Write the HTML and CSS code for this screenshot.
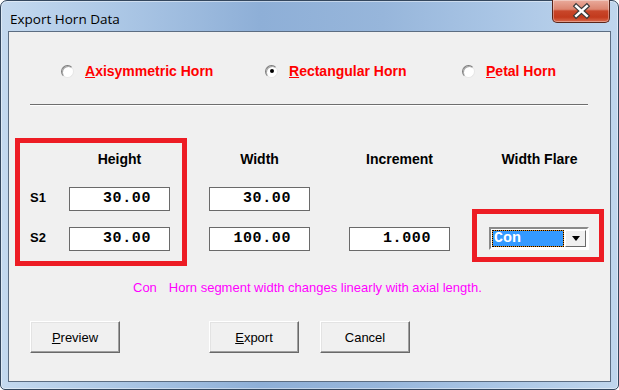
FILE: index.html
```html
<!DOCTYPE html>
<html>
<head>
<meta charset="utf-8">
<title>Export Horn Data</title>
<link rel="stylesheet" href="styles.css">
</head>
<body>
<div class="window">
  <div class="titlebar">
    <span class="title">Export Horn Data</span>
    <button class="close" aria-label="Close">
      <svg width="58" height="22" viewBox="0 0 58 22">
        <path d="M24 6 L35 16 M35 6 L24 16" stroke="#3a3a3a" stroke-width="5" stroke-linecap="square"/>
        <path d="M24 6 L35 16 M35 6 L24 16" stroke="#fff" stroke-width="2.6" stroke-linecap="square"/>
      </svg>
    </button>
  </div>
  <div class="client">
    <div class="radios">
      <label class="opt"><span class="radio"></span><span class="opt-text"><u>A</u>xisymmetric Horn</span></label>
      <label class="opt"><span class="radio radio-on"></span><span class="opt-text"><u>R</u>ectangular Horn</span></label>
      <label class="opt"><span class="radio"></span><span class="opt-text"><u>P</u>etal Horn</span></label>
    </div>
    <div class="sep"></div>
    <div class="grid">
      <div></div>
      <div class="hdr">Height</div>
      <div class="hdr">Width</div>
      <div class="hdr">Increment</div>
      <div class="hdr">Width Flare</div>

      <div class="rowlbl">S1</div>
      <div class="field">30.00</div>
      <div class="field">30.00</div>
      <div></div>
      <div></div>

      <div class="rowlbl">S2</div>
      <div class="field">30.00</div>
      <div class="field">100.00</div>
      <div class="field">1.000</div>
      <div class="combo">
        <span class="combo-value">Con</span>
        <span class="combo-btn"><span class="tri"></span></span>
      </div>
    </div>
    <p class="info"><span>Con</span><span class="info-desc">Horn segment width changes linearly with axial length.</span></p>
    <div class="buttons">
      <button class="btn"><u>P</u>review</button>
      <button class="btn"><u>E</u>xport</button>
      <button class="btn">Cancel</button>
    </div>
    <div class="mark mark-left"></div>
    <div class="mark mark-right"></div>
  </div>
</div>
</body>
</html>
```
FILE: styles.css
```css
html, body {
  margin: 0;
  padding: 0;
}
body {
  width: 619px;
  height: 390px;
  overflow: hidden;
  background: #ffffff;
  font-family: "Liberation Sans", Arial, sans-serif;
}
.window {
  position: relative;
  box-sizing: border-box;
  width: 619px;
  height: 390px;
  border: 1px solid #34475e;
  border-radius: 7px 7px 5px 5px;
  background: linear-gradient(90deg, #c4d9ef 0%, #adc8e6 18%, #8eafd7 42%, #97b6db 62%, #a9c5e5 80%, #c0d6ed 100%);
  box-shadow: inset 0 0 0 1px rgba(255,255,255,0.45);
  padding: 0 7px 7px;
  display: flex;
  flex-direction: column;
}
.titlebar {
  height: 30px;
  display: flex;
  align-items: flex-start;
}
.title {
  margin: 9px 0 0 2px;
  font-family: "Open Sans", "Noto Sans", sans-serif;
  font-size: 13.5px;
  line-height: 18px;
  color: #000;
}
.close {
  margin: -1px 1px 0 auto;
  width: 58px;
  height: 23px;
  padding: 0;
  box-sizing: border-box;
  border: 1px solid #5a2519;
  border-top: none;
  border-radius: 0 0 5px 5px;
  background: linear-gradient(#e9ab9c 0%, #dc8570 42%, #c8462a 50%, #c23a1d 78%, #d9694c 100%);
  box-shadow: inset 0 0 0 1px rgba(255,255,255,0.35);
  display: flex;
  align-items: center;
  justify-content: center;
}
.close svg {
  display: block;
}
.client {
  position: relative;
  flex: 1;
  box-sizing: border-box;
  background: #f0f0f0;
  border: 1px solid #5c6d82;
}
.radios {
  display: grid;
  grid-template-columns: 204px 197px auto;
  margin: 29px 0 0 52px;
  height: 20px;
  align-items: center;
}
.opt {
  display: flex;
  align-items: center;
  gap: 11px;
}
.radio {
  position: relative;
  box-sizing: border-box;
  width: 13px;
  height: 13px;
  border-radius: 50%;
  background: #ffffff;
  border: 1px solid;
  border-color: #7a7a7a #e6e6e6 #e6e6e6 #7a7a7a;
  box-shadow: inset 1px 1px 0 #a8a8a8;
}
.radio-on::after {
  content: "";
  position: absolute;
  left: 3.5px;
  top: 3.5px;
  width: 4px;
  height: 4px;
  border-radius: 50%;
  background: #000;
}
.opt-text {
  color: #ff0000;
  font-weight: bold;
  font-size: 14px;
  line-height: 17px;
}
.sep {
  margin: 23px 0 0 21px;
  width: 558px;
  height: 1px;
  background: #6e6e6e;
  border-bottom: 1px solid #ffffff;
}
.grid {
  display: grid;
  grid-template-columns: 39px repeat(4, 140px);
  grid-template-rows: 38px 40px 24px;
  margin: 43px 0 0 21px;
}
.hdr {
  width: 101px;
  text-align: center;
  font-weight: bold;
  font-size: 14px;
  line-height: 20px;
  color: #000;
}
.rowlbl {
  font-weight: bold;
  font-size: 13px;
  line-height: 22px;
  color: #000;
}
.field {
  width: 101px;
  height: 24px;
  box-sizing: border-box;
  background: #ffffff;
  border: 1px solid #6a6a6a;
  font-family: "Liberation Mono", "Courier New", monospace;
  font-weight: bold;
  font-size: 15px;
  letter-spacing: 0.6px;
  line-height: 21px;
  text-align: right;
  padding-right: 18px;
  color: #000;
}
.combo {
  width: 100px;
  height: 23px;
  box-sizing: border-box;
  border: 2px solid;
  border-color: #8a8a8a #ffffff #ffffff #8a8a8a;
  background: #ffffff;
  display: flex;
  padding: 1px;
}
.combo-value {
  flex: 1;
  box-sizing: border-box;
  border: 1px dotted #000;
  background: linear-gradient(#3399ff, #3399ff) padding-box, linear-gradient(#e08a1a, #e08a1a) border-box;
  color: #ffffff;
  font-family: "Liberation Mono", "Courier New", monospace;
  font-weight: bold;
  font-size: 15px;
  line-height: 15px;
  padding-left: 1px;
}
.combo-btn {
  width: 21px;
  box-sizing: border-box;
  margin-left: 1px;
  background: #f0f0f0;
  border: 1px solid;
  border-color: #ffffff #696969 #696969 #ffffff;
  display: flex;
  align-items: center;
  justify-content: center;
}
.tri {
  width: 0;
  height: 0;
  border-left: 4.5px solid transparent;
  border-right: 4.5px solid transparent;
  border-top: 5px solid #000;
}
.info {
  margin: 29px 0 0 124px;
  color: #ff00ff;
  font-size: 13px;
  line-height: 16px;
}
.info-desc {
  margin-left: 12px;
}
.buttons {
  display: grid;
  grid-template-columns: 179px 111px 90px;
  margin: 25px 0 0 21px;
}
.btn {
  width: 90px;
  height: 32px;
  box-sizing: border-box;
  padding: 0;
  background: #f0f0f0;
  border: 1px solid;
  border-color: #ffffff #696969 #696969 #ffffff;
  box-shadow: inset -1px -1px 0 #a0a0a0, inset 1px 1px 0 #e3e3e3;
  font-family: "Liberation Sans", Arial, sans-serif;
  font-size: 13px;
  color: #000;
}
.mark {
  position: absolute;
  box-sizing: border-box;
  border: 5px solid #ed1c24;
  pointer-events: none;
}
.mark-left {
  left: 6px;
  top: 106px;
  width: 172px;
  height: 128px;
}
.mark-right {
  left: 463px;
  top: 177px;
  width: 132px;
  height: 53px;
}
```
